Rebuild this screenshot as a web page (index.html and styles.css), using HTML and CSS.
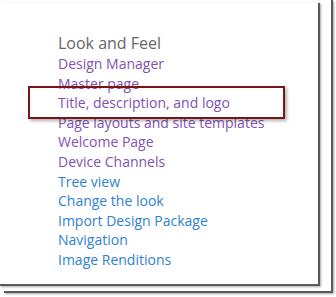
FILE: index.html
```html
<html>
    <head>
        <title>Look and Feel</title>
        <link rel="stylesheet" href="styles.css">
    </head>
    <body>
        <div class="back">
            <div class="page">
                <div class="settings">
                    <div class="heading">Look and Feel</div>
                    <a class="visited" href="#">Design Manager</a>
                    <a class="visited" href="#">Master page</a>
                    <a class="visited marked" href="#">Title, description, and logo</a>
                    <a class="visited" href="#">Page layouts and site templates</a>
                    <a class="visited" href="#">Welcome Page</a>
                    <a class="visited" href="#">Device Channels</a>
                    <a href="#">Tree view</a>
                    <a href="#">Change the look</a>
                    <a href="#">Import Design Package</a>
                    <a href="#">Navigation</a>
                    <a href="#">Image Renditions</a>
                </div>
            </div>
        </div>
    </body>
</html>
```
FILE: styles.css
```css
body {
    margin: 0;
    background: #fff;
    font-family: "Open Sans", "Noto Sans", sans-serif;
}
.back {
    margin-left: 4px;
    width: 327px;
    height: 291px;
    border-right: 2px solid #5a5a5a;
    border-bottom: 2px solid #5a5a5a;
    box-shadow: 1px 1px 2px rgba(0, 0, 0, 0.35);
}
.page {
    margin-left: -4px;
    position: relative;
    top: 3px;
    width: 318px;
    height: 281px;
    background: #fff;
    border-right: 2px solid #5a5a5a;
    border-bottom: 2px solid #5a5a5a;
    box-shadow: 1px 1px 2px rgba(0, 0, 0, 0.35);
}
.settings {
    display: flex;
    flex-direction: column;
    align-items: flex-start;
    padding: 29px 0 0 58px;
}
.heading {
    color: #666;
    font-size: 16px;
    line-height: 22px;
}
.settings a {
    color: #2f82d2;
    font-size: 14px;
    line-height: 19.6px;
    text-decoration: none;
    white-space: nowrap;
}
.settings a.visited {
    color: #8052b4;
}
.marked {
    position: relative;
}
.marked::after {
    content: "";
    position: absolute;
    left: -30px;
    top: -7px;
    width: 253px;
    height: 29px;
    border: 2px solid #7a1418;
    box-shadow: 2px 2px 3px rgba(0, 0, 0, 0.3);
}
```
